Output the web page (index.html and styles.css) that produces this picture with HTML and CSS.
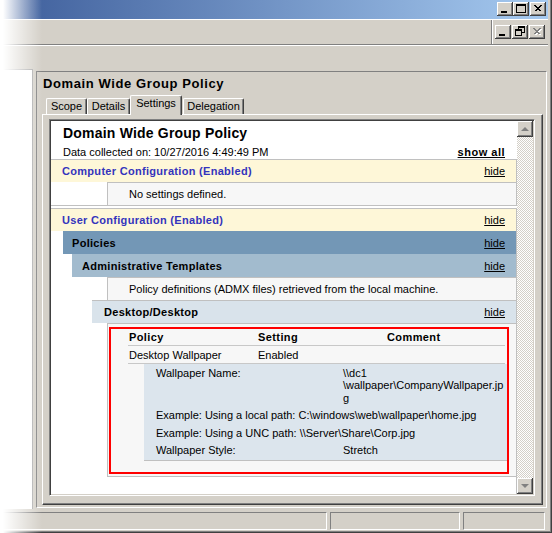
FILE: index.html
```html
<!DOCTYPE html>
<html>
<head>
<meta charset="utf-8">
<title>Group Policy Management</title>
<link rel="stylesheet" href="styles.css">
</head>
<body>
<div class="window">
  <div class="titlebar">
    <div class="capbtns">
      <span class="btn"><svg width="16" height="14"><rect x="4" y="9" width="6" height="2" fill="#000"/></svg></span>
      <span class="btn"><svg width="16" height="14"><rect x="3.5" y="2.5" width="9" height="8" fill="none" stroke="#000"/><rect x="3" y="2" width="10" height="2" fill="#000"/></svg></span>
      <span class="btn btn-close"><svg width="16" height="14" shape-rendering="crispEdges"><path d="M4.5 3.5 L10.5 9.5 M5.5 3.5 L11.5 9.5 M10.5 3.5 L4.5 9.5 M11.5 3.5 L5.5 9.5" stroke="#000" stroke-width="1" fill="none"/></svg></span>
    </div>
  </div>
  <div class="menubar">
    <div class="menuband"></div>
    <div class="mdibtns">
      <span class="btn"><svg width="16" height="14"><rect x="4" y="9" width="6" height="2" fill="#000"/></svg></span>
      <span class="btn"><svg width="16" height="14"><rect x="6.5" y="1.5" width="6" height="6" fill="none" stroke="#000"/><rect x="6" y="1" width="7" height="2" fill="#000"/><rect x="3.5" y="4.5" width="6" height="6" fill="#d4d0c8" stroke="#000"/><rect x="3" y="4" width="7" height="2" fill="#000"/></svg></span>
      <span class="btn"><svg width="16" height="14" shape-rendering="crispEdges"><path d="M5.5 4.5 L11.5 10.5 M6.5 4.5 L12.5 10.5 M11.5 4.5 L5.5 10.5 M12.5 4.5 L6.5 10.5" stroke="#fff" stroke-width="1" fill="none"/><path d="M4.5 3.5 L10.5 9.5 M5.5 3.5 L11.5 9.5 M10.5 3.5 L4.5 9.5 M11.5 3.5 L5.5 9.5" stroke="#808080" stroke-width="1" fill="none"/></svg></span>
    </div>
  </div>
  <div class="toolbar"></div>
  <div class="main">
    <div class="leftpane"></div>
    <div class="splitter"></div>
    <div class="rightpane">
      <div class="panetitle">Domain Wide Group Policy</div>
      <div class="tabs">
        <div class="tab t-scope">Scope</div>
        <div class="tab t-details">Details</div>
        <div class="tab t-settings active">Settings</div>
        <div class="tab t-deleg">Delegation</div>
      </div>
      <div class="tabpanel">
        <div class="browser">
          <div class="report">
            <div class="rtitle">Domain Wide Group Policy</div>
            <div class="dataline"><span>Data collected on: 10/27/2016 4:49:49 PM</span><span class="showall">show all</span></div>
            <div class="section">
              <div class="band he0"><span>Computer Configuration (Enabled)</span><span class="hide">hide</span></div>
              <div class="info">No settings defined.</div>
            </div>
            <div class="section open">
              <div class="band he0"><span>User Configuration (Enabled)</span><span class="hide">hide</span></div>
              <div class="band he1"><span>Policies</span><span class="hide">hide</span></div>
              <div class="band he2"><span>Administrative Templates</span><span class="hide">hide</span></div>
              <div class="info">Policy definitions (ADMX files) retrieved from the local machine.</div>
              <div class="band he3"><span>Desktop/Desktop</span><span class="hide">hide</span></div>
              <div class="tablebox">
                <div class="highlight">
                  <div class="thead"><span>Policy</span><span>Setting</span><span>Comment</span></div>
                  <div class="trow"><span>Desktop Wallpaper</span><span>Enabled</span><span></span></div>
                  <div class="subtable">
                    <div class="sublabel">Wallpaper Name:</div>
                    <div class="subval">\\dc1<br>\wallpaper\CompanyWallpaper.jp<br>g</div>
                    <div class="subfull">Example: Using a local path: C:\windows\web\wallpaper\home.jpg</div>
                    <div class="subfull">Example: Using a UNC path: \\Server\Share\Corp.jpg</div>
                    <div class="sublabel">Wallpaper Style:</div>
                    <div class="subval">Stretch</div>
                  </div>
                </div>
              </div>
            </div>
          </div>
          <div class="scrollbar">
            <div class="sbtn"><span class="arrow-up"></span></div>
            <div class="track"></div>
            <div class="sbtn"><span class="arrow-down"></span></div>
          </div>
        </div>
      </div>
    </div>
  </div>
  <div class="statusbar">
    <div class="sp sp1"></div>
    <div class="sp sp2"></div>
    <div class="sp sp3"></div>
  </div>
  <div class="fade"></div>
</div>
</body>
</html>
```

FILE: styles.css
```css
* { box-sizing: border-box; }
html, body { margin: 0; padding: 0; background: #fff; }
body {
  font-family: "Liberation Sans", Arial, sans-serif;
  font-size: 11px;
  color: #000;
}

.window {
  position: relative;
  width: 552px;
  height: 533px;
  overflow: hidden;
  background: #d4d0c8;
  display: flex;
  flex-direction: column;
  padding-right: 4px;
  box-shadow: inset -1px -1px 0 #404040, inset -2px -2px 0 #808080;
}

/* title bar */
.titlebar {
  height: 19px;
  flex: none;
  background: linear-gradient(to right, #3e5e9b, #a6caf0);
  display: flex;
  justify-content: flex-end;
  align-items: flex-start;
  padding: 2px 2px 0 0;
}
.capbtns { display: flex; }
.btn {
  display: block;
  width: 16px;
  height: 14px;
  background: #d4d0c8;
  box-shadow: inset -1px -1px 0 #404040, inset 1px 1px 0 #fff, inset -2px -2px 0 #808080;
}
.btn svg { display: block; }
.btn-close { margin-left: 1px; }

/* menu bar with MDI buttons */
.menubar {
  height: 26px;
  flex: none;
  display: flex;
  border-top: 1px solid #fff;
  border-bottom: 1px solid #808080;
}
.menuband {
  flex: 1;
  border-right: 1px solid #808080;
  box-shadow: 1px 0 0 #fff;
}
.mdibtns {
  display: flex;
  gap: 1px;
  padding: 5px 3px 0 3px;
}

.toolbar {
  height: 24px;
  flex: none;
  border-top: 1px solid #fff;
}

/* main area */
.main {
  height: 440px;
  flex: none;
  display: flex;
}
.leftpane {
  width: 33px;
  background: #fff;
  border-top: 1px solid #a9a9a9;
  border-right: 1px solid #a9a9a9;
}
.splitter { width: 3px; }
.rightpane {
  width: 511px;
  height: 437px;
  margin-top: 2px;
  border: 1px solid;
  border-color: #808080 #fff #fff #808080;
  padding: 4px 3px 2px 5px;
  display: flex;
  flex-direction: column;
}
.panetitle {
  height: 16px;
  line-height: 16px;
  font-size: 13px;
  font-weight: bold;
  letter-spacing: 0.6px;
  padding-left: 1px;
}

/* tabs */
.tabs {
  height: 20px;
  margin: 3px 0 0 4px;
  display: flex;
  align-items: flex-end;
}
.tab {
  height: 17px;
  line-height: 15px;
  text-align: center;
  font-size: 11px;
  border-top: 1px solid #fff;
  border-left: 1px solid #fff;
  border-right: 1px solid #404040;
  box-shadow: inset -1px 0 0 #808080;
  border-radius: 2px 2px 0 0;
  background: #d4d0c8;
}
.t-scope { width: 41px; }
.t-details { width: 43px; }
.t-settings { width: 52px; margin-right: 1px; }
.t-deleg { width: 61px; }
.tab.active {
  height: 20px;
  line-height: 14px;
  position: relative;
  z-index: 2;
}

.tabpanel {
  width: 501px;
  height: 391px;
  margin-top: -1px;
  border-top: 1px solid #fff;
  border-left: 1px solid #fff;
  border-right: 1px solid #404040;
  border-bottom: 1px solid #404040;
  box-shadow: inset -1px -1px 0 #808080;
  padding: 4px 7px 8px 6px;
}

/* embedded report browser */
.browser {
  width: 486px;
  height: 377px;
  border: 1px solid;
  border-color: #808080 #fff #fff #808080;
  padding: 1px;
  box-shadow: inset 1px 1px 0 #404040, inset -1px -1px 0 #d4d0c8;
  display: flex;
}
.report {
  width: 466px;
  height: 373px;
  background: #fff;
  overflow: hidden;
  padding-top: 4px;
}
.rtitle {
  margin-left: 12px;
  height: 17px;
  line-height: 17px;
  font-size: 14px;
  font-weight: bold;
  letter-spacing: 0.2px;
}
.dataline {
  margin-top: 4px;
  height: 13px;
  line-height: 13px;
  display: flex;
  justify-content: space-between;
  padding: 0 12px;
}
.showall {
  font-weight: bold;
  text-decoration: underline;
  letter-spacing: 0.5px;
}
.hide { text-decoration: underline; }

.section {
  border-top: 1px solid #c0c0c0;
  border-right: 1px solid #c0c0c0;
  border-bottom: 1px solid #c0c0c0;
  margin-bottom: 2px;
}
.section.open {
  border-bottom: none;
  padding-bottom: 40px;
}
.band {
  height: 23px;
  display: flex;
  align-items: center;
  justify-content: space-between;
  padding-right: 11px;
  font-weight: bold;
  letter-spacing: 0.3px;
}
.band .hide { font-weight: normal; letter-spacing: 0; }
.he0 {
  height: 22px;
  background: #fef7d8;
  color: #3434bd;
  padding-left: 11px;
}
.he0 .hide { color: #000; }
.he1 {
  margin-left: 12px;
  background: #7397b6;
  padding-left: 9px;
}
.he2 {
  margin-left: 21px;
  background: #a2bbce;
  padding-left: 10px;
}
.he3 {
  margin-left: 41px;
  background: #d9e3eb;
  border-top: 1px solid #c0c0c0;
  padding-left: 12px;
}
.info {
  margin-left: 56px;
  height: 23px;
  border-top: 1px solid #c0c0c0;
  border-left: 1px solid #c0c0c0;
  background: #f7f7f7;
  padding-left: 21px;
  display: flex;
  align-items: center;
}

/* settings table */
.tablebox {
  margin-left: 56px;
  background: #f7f7f7;
  border-top: 1px solid #c0c0c0;
  border-left: 1px solid #c0c0c0;
  border-bottom: 1px solid #c0c0c0;
  padding: 3px 7px 2px 1px;
}
.highlight {
  height: 147px;
  border: 2px solid #ff0000;
  padding-left: 17px;
}
.thead, .trow {
  display: grid;
  grid-template-columns: 129px 129px 1fr;
  align-items: center;
  padding-left: 1px;
  margin-right: 2px;
  border-bottom: 1px solid #c8c8c8;
}
.thead {
  height: 17px;
  font-weight: bold;
  letter-spacing: 0.4px;
}
.trow { height: 18px; }
.subtable {
  margin-left: 16px;
  background: #dce5ed;
  border-bottom: 1px solid #c0c0c0;
  padding-bottom: 1px;
  display: grid;
  grid-template-columns: 199px 1fr;
  line-height: 12.5px;
}
.sublabel, .subval, .subfull {
  padding: 2.5px 0;
  white-space: nowrap;
}
.sublabel, .subfull { padding-left: 12px; }
.subfull { grid-column: 1 / -1; }

/* scrollbar */
.scrollbar {
  width: 16px;
  height: 373px;
  display: flex;
  flex-direction: column;
}
.sbtn {
  height: 16px;
  flex: none;
  background: #d4d0c8;
  box-shadow: inset -1px -1px 0 #404040, inset 1px 1px 0 #fff, inset -2px -2px 0 #808080;
  display: flex;
  align-items: center;
  justify-content: center;
}
.arrow-up, .arrow-down {
  width: 0;
  height: 0;
  border-left: 4px solid transparent;
  border-right: 4px solid transparent;
}
.arrow-up { border-bottom: 4px solid #808080; margin-top: -1px; }
.arrow-down { border-top: 4px solid #808080; }
.track {
  flex: 1;
  background-image: conic-gradient(#fff 25%, #d4d0c8 0 50%, #fff 0 75%, #d4d0c8 0);
  background-size: 2px 2px;
}

/* status bar */
.statusbar {
  height: 24px;
  flex: none;
  display: flex;
  gap: 3px;
  padding: 3px 3px 3px 0;
}
.sp {
  height: 18px;
  border: 1px solid;
  border-color: #808080 #fff #fff #808080;
}
.sp1 { width: 327px; }
.sp2 { width: 130px; }
.sp3 { flex: 1; }

/* faded left edge of the capture */
.fade {
  position: absolute;
  left: 0;
  top: 0;
  width: 42px;
  height: 533px;
  pointer-events: none;
  background: linear-gradient(to right, #fff 0, #fff 3px, rgba(255,255,255,0) 42px);
}
```
